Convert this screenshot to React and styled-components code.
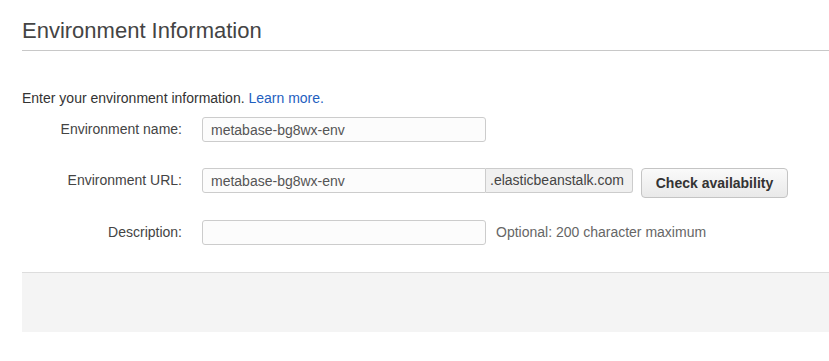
import React from 'react'
import styled, { createGlobalStyle } from 'styled-components'

const GlobalStyle = createGlobalStyle`
  body {
    margin: 0;
    background: #fff;
    font-family: "Liberation Sans", Arial, sans-serif;
    color: #333;
  }
`

function App() {
  return (
    <>
      <GlobalStyle />
      <Page>
        <Heading>Environment Information</Heading>
        <Intro>
          Enter your environment information. <Link href="#">Learn more.</Link>
        </Intro>
        <Form>
          <Row>
            <Label>Environment name:</Label>
            <TextInput defaultValue="metabase-bg8wx-env" />
          </Row>
          <Row>
            <Label>Environment URL:</Label>
            <TextInput defaultValue="metabase-bg8wx-env" $joined />
            <Addon>.elasticbeanstalk.com</Addon>
            <Button type="button">Check availability</Button>
          </Row>
          <Row>
            <Label>Description:</Label>
            <TextInput defaultValue="" />
            <Help>Optional: 200 character maximum</Help>
          </Row>
        </Form>
        <Footer />
      </Page>
    </>
  )
}

const Page = styled.div`
  padding: 18px 0 0 22px;
`

const Heading = styled.h1`
  margin: 0;
  padding-bottom: 6px;
  border-bottom: 1px solid #c8c8c8;
  font-size: 22px;
  line-height: 26px;
  font-weight: 400;
  color: #444;
`

const Intro = styled.p`
  margin: 39px 0 0;
  font-size: 14px;
  line-height: 16px;
  color: #333;
`

const Link = styled.a`
  color: #1f5fbf;
  text-decoration: none;
`

const Form = styled.div`
  display: flex;
  flex-direction: column;
  margin-top: 11px;
`

const Row = styled.div`
  display: flex;
  align-items: flex-start;
  height: 52px;
  &:first-child {
    height: 51px;
  }
`

const Label = styled.label`
  width: 160px;
  margin-right: 20px;
  text-align: right;
  font-size: 14px;
  line-height: 25px;
  color: #444;
`

const TextInput = styled.input`
  box-sizing: border-box;
  width: 284px;
  height: 25px;
  padding: 0 8px;
  border: 1px solid #ccc;
  border-radius: ${(p) => (p.$joined ? '3px 0 0 3px' : '3px')};
  background: #fcfcfc;
  font-family: inherit;
  font-size: 14px;
  color: #555;
  outline: none;
`

const Addon = styled.span`
  box-sizing: border-box;
  height: 25px;
  padding: 0 0 0 4px;
  width: 147px;
  border: 1px solid #ccc;
  border-left: none;
  border-radius: 0 3px 3px 0;
  background: #f0f0f0;
  font-size: 14px;
  line-height: 23px;
  color: #444;
  white-space: nowrap;
`

const Button = styled.button`
  box-sizing: border-box;
  margin-left: 8px;
  width: 147px;
  height: 30px;
  border: 1px solid #c4c4c4;
  border-radius: 4px;
  background: linear-gradient(#fafafa, #e9e9e9);
  font-family: inherit;
  font-size: 14px;
  font-weight: 700;
  color: #333;
  padding: 0;
`

const Help = styled.span`
  margin-left: 10px;
  font-size: 14px;
  line-height: 25px;
  color: #666;
`

const Footer = styled.div`
  height: 59px;
  border-top: 1px solid #ddd;
  background: #f4f4f4;
`

export default App
